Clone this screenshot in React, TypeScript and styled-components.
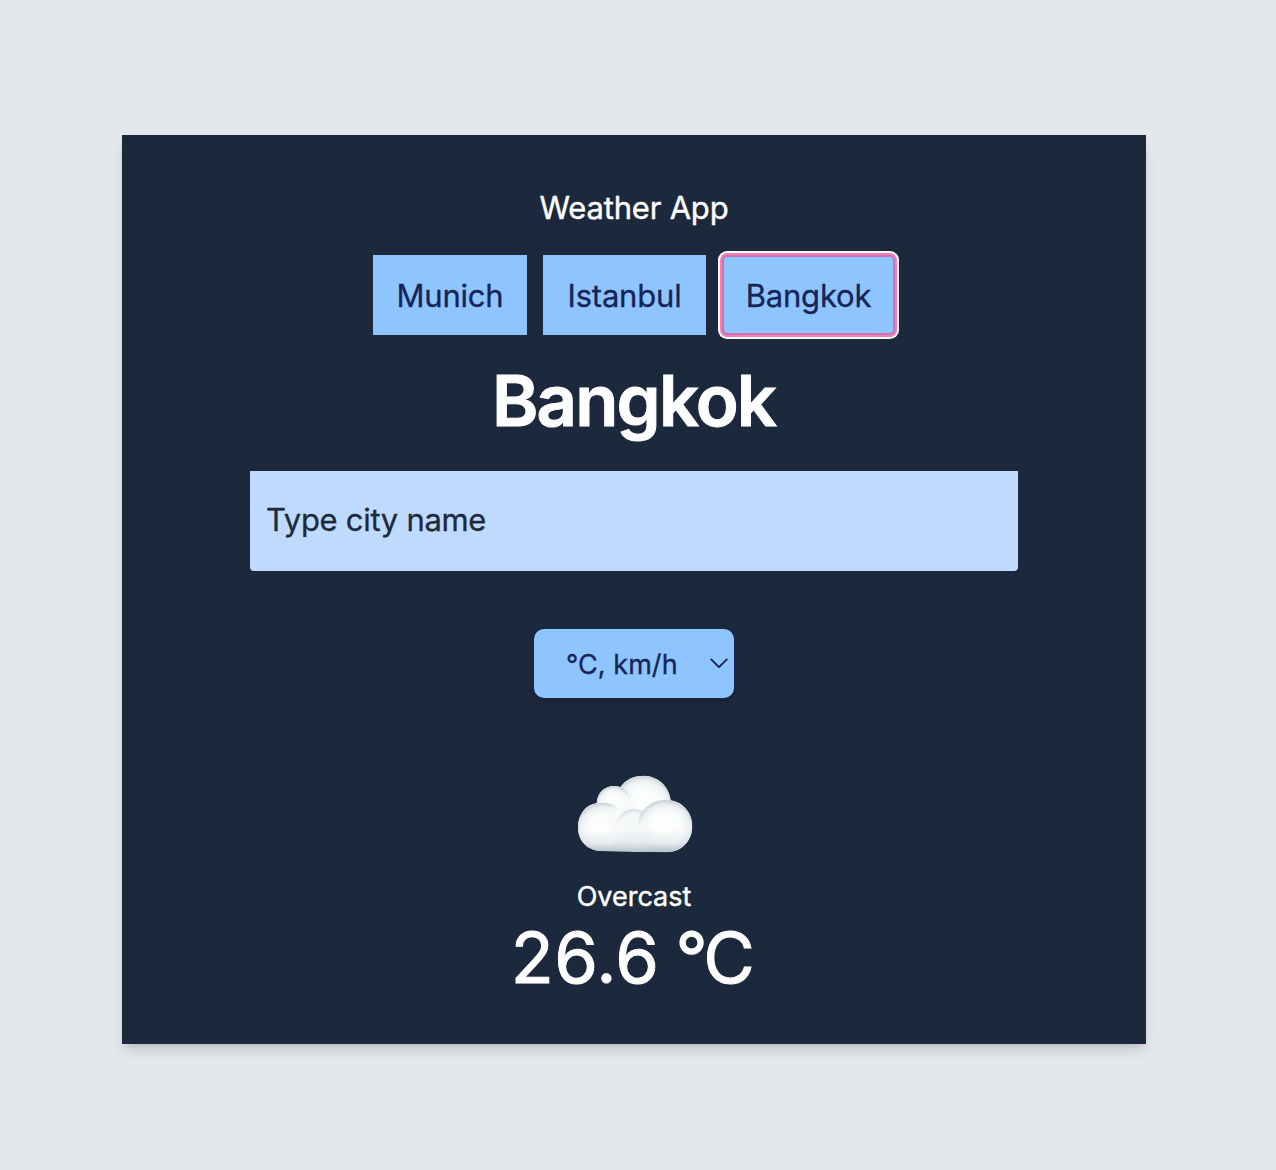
import React, { useState } from "react";
import styled, { createGlobalStyle, css } from "styled-components";

const GlobalStyle = createGlobalStyle`
  *, *::before, *::after { box-sizing: border-box; }
  body {
    margin: 0;
    background: #e4e7eb;
    font-family: Inter, "Liberation Sans", sans-serif;
    font-feature-settings: "calt" 0;
  }
`;

const Page = styled.main`
  min-height: 1170px;
  padding: 135px 130px 126px 122px;
`;

const Card = styled.section`
  display: flex;
  flex-direction: column;
  align-items: center;
  height: 909px;
  padding-top: 49px;
  background: #1c293c;
  color: #fff;
  box-shadow: 0 8px 12px -2px rgba(0, 0, 0, 0.12), 0 4px 8px -4px rgba(0, 0, 0, 0.12);
`;

const Title = styled.p`
  margin: 0;
  font-size: 31px;
  line-height: 48px;
  letter-spacing: -0.2px;
  -webkit-text-stroke: 0.4px currentColor;
`;

const CityList = styled.nav`
  display: flex;
  gap: 16px;
  margin-top: 23px;
`;

const CityButton = styled.button<{ $width: number; $active: boolean }>`
  width: ${(p) => p.$width}px;
  height: 80px;
  padding: 2px 0 0;
  border: 0;
  background: #8ec5ff;
  color: #162456;
  font: inherit;
  font-size: 31px;
  line-height: 48px;
  letter-spacing: -0.2px;
  -webkit-text-stroke: 0.3px currentColor;
  cursor: pointer;
  outline: none;
  ${(p) =>
    p.$active &&
    css`
      border-radius: 5px;
      box-shadow: inset 0 0 0 2px #d06fb8, 0 0 0 2px #f780b1, 0 0 0 4px #fff;
    `}
`;

const CityName = styled.h1`
  margin: 30px 0 0;
  font-size: 70.5px;
  line-height: 72px;
  font-weight: 600;
  letter-spacing: -1.8px;
  text-indent: -1px;
  -webkit-text-stroke: 1px currentColor;
`;

const SearchInput = styled.input`
  width: 768px;
  height: 100px;
  margin-top: 34px;
  padding: 0 16px 3px;
  border: 0;
  border-radius: 0 0 4px 4px;
  background: #bedbff;
  color: #1e293b;
  font: inherit;
  font-size: 31px;
  letter-spacing: -0.3px;
  -webkit-text-stroke: 0.3px currentColor;
  outline: none;
  &::placeholder {
    color: #1e293b;
    opacity: 1;
  }
`;

const UnitButton = styled.button`
  display: flex;
  align-items: center;
  justify-content: space-between;
  width: 200px;
  height: 69px;
  margin-top: 58px;
  padding: 1px 6px 0 32px;
  border: 0;
  border-radius: 10px;
  background: #8ec5ff;
  color: #162456;
  font: inherit;
  font-size: 27px;
  letter-spacing: 0.05px;
  -webkit-text-stroke: 0.3px currentColor;
  box-shadow: 0 0 0 1px #1a2750, 0 2px 5px rgba(0, 0, 0, 0.25);
`;

const Chevron = styled.svg`
  width: 18px;
  height: 12px;
  margin-top: -2px;
`;

const CloudDrawing = styled.svg`
  width: 150px;
  height: 110px;
  margin: 62px 0 0 2px;
`;

const Condition = styled.p`
  margin: 7px 0 0;
  font-size: 27px;
  line-height: 40px;
  -webkit-text-stroke: 0.4px currentColor;
`;

const Temperature = styled.p`
  display: flex;
  gap: 16px;
  margin: 5px 0 0;
  padding-right: 6px;
  font-size: 70.5px;
  line-height: 72px;
  letter-spacing: 0.5px;
  -webkit-text-stroke: 1px currentColor;
`;

const Unit = styled.span`
  letter-spacing: -3.5px;
`;

const cities = [
  { name: "Munich", width: 154 },
  { name: "Istanbul", width: 163 },
  { name: "Bangkok", width: 173 },
];

function Cloud() {
  return (
    <CloudDrawing viewBox="0 0 450 330" role="img" aria-label="Cloud">
      <defs>
        <radialGradient id="puff" cx="0.5" cy="0.55" r="0.55">
          <stop offset="0" stopColor="#ffffff" />
          <stop offset="0.6" stopColor="#f9fbfb" />
          <stop offset="0.82" stopColor="#edf1f3" />
          <stop offset="1" stopColor="#c6cfd7" />
        </radialGradient>
        <radialGradient id="bump" cx="0.52" cy="0.6" r="0.6">
          <stop offset="0" stopColor="#f7f9fa" />
          <stop offset="0.75" stopColor="#f4f6f7" />
          <stop offset="1" stopColor="#dbe0e4" />
        </radialGradient>
        <linearGradient id="base" x1="0" y1="0" x2="0" y2="1">
          <stop offset="0" stopColor="#b3bfc9" stopOpacity="0" />
          <stop offset="0.55" stopColor="#b3bfc9" stopOpacity="0.22" />
          <stop offset="1" stopColor="#a3b1bd" stopOpacity="0.85" />
        </linearGradient>
        <linearGradient id="fade" x1="0" y1="0" x2="0" y2="1">
          <stop offset="0.1" stopColor="#fff" />
          <stop offset="0.5" stopColor="#000" />
        </linearGradient>
        <mask id="bumpMask">
          <rect x="150" y="140" width="150" height="136" fill="url(#fade)" />
        </mask>
        <filter id="soft" x="-40%" y="-40%" width="180%" height="180%">
          <feGaussianBlur stdDeviation="9" />
        </filter>
        <clipPath id="outline">
          <path d="M126 273C80 273 54 242 54 202C54 162 78 133 110 129C111 99 133 78 162 78C169 78 175 79 181 81C197 58 222 47 249 47C293 47 328 79 332 121C371 127 397 160 397 199C397 243 364 277 320 277Z" />
        </clipPath>
      </defs>
      <g clipPath="url(#outline)">
        <rect x="50" y="40" width="350" height="240" fill="#f5f7f8" />
        <circle cx="250" cy="130" r="84" fill="url(#puff)" />
        <circle cx="162" cy="130" r="52" fill="url(#puff)" />
        <ellipse cx="206" cy="135" rx="28" ry="32" fill="#f8fafb" filter="url(#soft)" />
        <ellipse cx="128" cy="201" rx="75" ry="73" fill="url(#puff)" />
        <ellipse cx="180" cy="185" rx="34" ry="60" fill="#f8fafb" filter="url(#soft)" />
        <ellipse cx="222" cy="213" rx="58" ry="67" fill="url(#bump)" mask="url(#bumpMask)" />
        <ellipse cx="315" cy="199" rx="83" ry="79" fill="url(#puff)" />
        <ellipse cx="236" cy="232" rx="42" ry="48" fill="#f6f8f9" filter="url(#soft)" />
        <rect x="50" y="205" width="350" height="75" fill="url(#base)" />
      </g>
    </CloudDrawing>
  );
}

export default function App() {
  const [city, setCity] = useState("Bangkok");
  return (
    <>
      <GlobalStyle />
      <Page>
        <Card>
          <Title>Weather App</Title>
          <CityList>
            {cities.map((c) => (
              <CityButton
                key={c.name}
                $width={c.width}
                $active={c.name === city}
                onClick={() => setCity(c.name)}
              >
                {c.name}
              </CityButton>
            ))}
          </CityList>
          <CityName>{city}</CityName>
          <SearchInput placeholder="Type city name" />
          <UnitButton>
            °C, km/h
            <Chevron viewBox="0 0 18 12" fill="none" stroke="currentColor" strokeWidth="1.9" strokeLinecap="round" strokeLinejoin="round">
              <path d="M1.2 2.4L9 10.2L16.8 2.4" />
            </Chevron>
          </UnitButton>
          <Cloud />
          <Condition>Overcast</Condition>
          <Temperature>
            <span>26.6</span> <Unit>°C</Unit>
          </Temperature>
        </Card>
      </Page>
    </>
  );
}
